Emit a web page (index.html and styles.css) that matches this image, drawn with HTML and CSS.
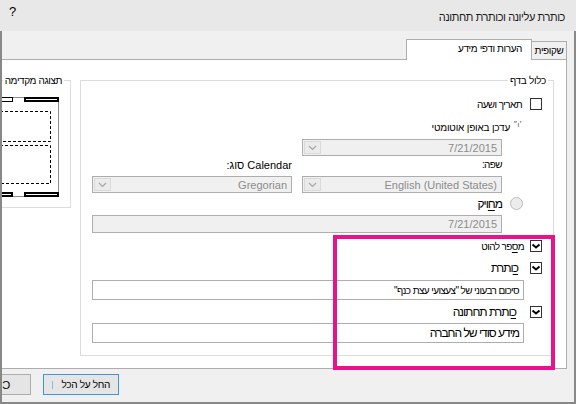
FILE: index.html
```html
<!DOCTYPE html>
<html lang="he" dir="rtl">
<head>
  <meta charset="UTF-8" />
  <title>כותרת עליונה וכותרת תחתונה</title>
  <link rel="stylesheet" href="styles.css">
</head>
<body>
  <div class="window">
    <div class="titlebar">
      <span class="title">כותרת עליונה וכותרת תחתונה</span>
      <span class="help">?</span>
    </div>

    <div class="frame">
      <div class="tabs">
        <div class="tab">שקופית</div>
        <div class="tab active">הערות ודפי מידע</div>
      </div>

      <div class="panel">
        <fieldset class="group include">
          <legend>כלול בדף</legend>

          <div class="opt-row date-row">
            <span class="check"></span>
            <span>תאריך ושעה</span>
          </div>

          <div class="auto-row">
            <span class="radio-mark">׳ו״</span>
            <span>עדכן באופן אוטומטי</span>
          </div>

          <div class="field-row first-select">
            <div class="select">
              <span class="value"><bdi>7/21/2015</bdi></span>
              <span class="drop"><svg width="9" height="6" viewBox="0 0 9 6"><path d="M1 1L4.5 4.5L8 1" fill="none" stroke="#a6a6a6" stroke-width="1.2"/></svg></span>
            </div>
          </div>

          <div class="field-row label-row">
            <span>שפה:</span>
            <span class="mixed">Calendar סוג:</span>
          </div>

          <div class="field-row select-row">
            <div class="select">
              <span class="value"><bdi>English (United States)</bdi></span>
              <span class="drop"><svg width="9" height="6" viewBox="0 0 9 6"><path d="M1 1L4.5 4.5L8 1" fill="none" stroke="#a6a6a6" stroke-width="1.2"/></svg></span>
            </div>
            <div class="select">
              <span class="value"><bdi>Gregorian</bdi></span>
              <span class="drop"><svg width="9" height="6" viewBox="0 0 9 6"><path d="M1 1L4.5 4.5L8 1" fill="none" stroke="#a6a6a6" stroke-width="1.2"/></svg></span>
            </div>
          </div>

          <div class="radio-row">
            <span class="radio"></span>
            <span class="big">מ<u>ח</u>ויק</span>
          </div>

          <div class="field-row fixed-row">
            <div class="box off"><bdi>7/21/2015</bdi></div>
          </div>

          <div class="opt-row slide-row">
            <span class="check"><svg width="10" height="10" viewBox="0 0 10 10"><path d="M1.5 3.5L5 6.5L8.5 3.5" fill="none" stroke="#000" stroke-width="2"/></svg></span>
            <span>מ<u>ס</u>פר להוט</span>
          </div>

          <div class="opt-row header-row">
            <span class="check"><svg width="10" height="10" viewBox="0 0 10 10"><path d="M1.5 3.5L5 6.5L8.5 3.5" fill="none" stroke="#000" stroke-width="2"/></svg></span>
            <span class="big"><u>כ</u>ותרת</span>
          </div>

          <div class="text-row header-text">
            <div class="box">סיכום רבעוני של "צעצועי עצת כנף"</div>
          </div>

          <div class="opt-row footer-row">
            <span class="check"><svg width="10" height="10" viewBox="0 0 10 10"><path d="M1.5 3.5L5 6.5L8.5 3.5" fill="none" stroke="#000" stroke-width="2"/></svg></span>
            <span class="big"><u>כ</u>ותרת תחתונה</span>
          </div>

          <div class="text-row footer-text">
            <div class="box big">מידע סודי של החברה</div>
          </div>
        </fieldset>

        <fieldset class="group preview">
          <legend>תצוגה מקדימה</legend>
          <!-- page thumbnail: header/footer placeholders and the two dashed body areas -->
          <svg class="thumb" width="70" height="101" viewBox="-11 96 70 101">
            <rect x="-20.5" y="97.5" width="79" height="99" fill="#fff" stroke="#8c8c8c"/>
            <path d="M-20 111.5H50.5V141.5H-20" fill="none" stroke="#000" stroke-dasharray="3 2"/>
            <path d="M-20 145.5H50.5V183.5H-20" fill="none" stroke="#000" stroke-dasharray="3 2"/>
            <rect x="-20.5" y="97.5" width="33" height="4" fill="#fff" stroke="#000"/>
            <rect x="25" y="98" width="33" height="3" fill="#fff" stroke="#000" stroke-width="2"/>
            <rect x="-20" y="193" width="32" height="3" fill="#fff" stroke="#000" stroke-width="2"/>
            <rect x="25" y="193" width="33" height="3" fill="#fff" stroke="#000" stroke-width="2"/>
          </svg>
        </fieldset>
      </div>

      <div class="buttons">
        <div class="btn apply"><span>החל על הכל</span><span class="caret"></span></div>
        <div class="btn cancel"><span class="flip">Cancel</span></div>
      </div>
    </div>

    <div class="highlight"></div>
  </div>
</body>
</html>
```

FILE: styles.css
```css
* {
  box-sizing: border-box;
}
html, body {
  margin: 0;
}
body {
  width: 576px;
  height: 404px;
  overflow: hidden;
  background-color: #f0f0f0;
  font-family: "Liberation Sans", Arial, sans-serif;
  font-size: 10px;
  letter-spacing: -0.6px;
  color: #000;
}
bdi, .mixed {
  font-size: 11px;
  letter-spacing: 0;
}
u {
  text-decoration: underline;
  text-underline-offset: 2px;
}
.window {
  position: relative;
  width: 576px;
  height: 404px;
}

/* title bar */
.titlebar {
  display: flex;
  align-items: flex-start;
  height: 31px;
  padding: 0 11px 0 9px;
  background-color: #e8e8e8;
}
.title {
  margin-top: 10px;
  font-size: 11px;
  letter-spacing: -0.4px;
  line-height: 14px;
  color: #1a1a1a;
}
.help {
  margin-right: auto;
  margin-top: 5px;
  font-size: 13px;
  letter-spacing: 0;
  line-height: 14px;
}

/* dialog body */
.frame {
  height: 373px;
  padding-top: 8px;
  border: 2px solid #888;
  border-top: 0;
  background-color: #f0f0f0;
  overflow: hidden;
}
.tabs {
  display: flex;
  align-items: flex-start;
  height: 21px;
  margin: 0 7px -1px 0;
}
.tab {
  width: 36px;
  height: 18px;
  margin-top: 2px;
  border: 1px solid #adadad;
  border-bottom: 0;
  background-color: #f0f0f0;
  text-align: center;
  letter-spacing: -0.4px;
  line-height: 17px;
}
.tab.active {
  position: relative;
  z-index: 1;
  width: 126px;
  height: 21px;
  margin-top: 0;
  margin-right: -1px;
  padding-right: 9px;
  background-color: #fff;
  text-align: right;
  line-height: 18px;
}
.panel {
  display: flex;
  align-items: flex-start;
  gap: 9px;
  width: 607px;
  height: 310px;
  margin-right: 7px;
  padding: 14px 12px 0 10px;
  border: 1px solid #adadad;
  background-color: #fff;
}

/* group boxes */
.group {
  margin: 0;
  padding: 0;
  min-width: 0;
  border: 1px solid #dcdcdc;
}
.group legend {
  margin-right: 5px;
  padding: 0 2px;
  font-size: 10px;
  letter-spacing: -0.3px;
  line-height: 13px;
}
.include {
  flex: none;
  width: 474px;
  padding-bottom: 12px;
}
.preview {
  flex: none;
  width: 100px;
  padding-bottom: 10px;
}
.preview legend {
  margin-right: 6px;
  letter-spacing: -0.4px;
}
.thumb {
  display: block;
  margin: 9px 11px 0 0;
}

/* rows inside the include box */
.opt-row {
  display: flex;
  align-items: center;
  gap: 8px;
  height: 12px;
  padding-right: 11px;
}
.check {
  flex: none;
  display: flex;
  align-items: center;
  justify-content: center;
  width: 12px;
  height: 12px;
  border: 1px solid #333;
  background-color: #fff;
}
.date-row {
  margin-top: 11px;
}
.auto-row {
  display: flex;
  align-items: center;
  gap: 2px;
  height: 14px;
  margin-top: 10px;
  padding-right: 31px;
  letter-spacing: -0.2px;
}
.radio-mark {
  display: inline-block;
  width: 10px;
  margin-top: -6px;
  font-size: 7px;
  letter-spacing: 0;
  line-height: 7px;
  color: #444;
}
.field-row {
  display: flex;
  gap: 10px;
  padding-right: 51px;
}
.first-select {
  margin-top: 5px;
}
.label-row {
  height: 14px;
  margin-top: 2px;
  line-height: 14px;
}
.label-row span {
  width: 200px;
}
.select-row {
  margin-top: 4px;
}
.select {
  display: flex;
  align-items: center;
  width: 200px;
  height: 17px;
  border: 1px solid #adadad;
  background-color: #f0f0f0;
  color: #8c8c8c;
}
.select .value {
  flex: 1;
  padding-right: 4px;
}
.select .drop {
  display: flex;
  align-items: center;
  justify-content: center;
  width: 17px;
  height: 13px;
  margin-left: 1px;
  border: 1px solid #dadada;
  background-color: #ebebeb;
}
.radio-row {
  display: flex;
  align-items: center;
  gap: 8px;
  height: 13px;
  margin-top: 4px;
  padding-right: 30px;
}
.radio {
  flex: none;
  width: 13px;
  height: 13px;
  border: 1px solid #bcbcbc;
  border-radius: 50%;
  background-color: #ececec;
}
.big {
  font-size: 12px;
  letter-spacing: -1px;
}
.fixed-row {
  margin-top: 5px;
}
.box {
  display: flex;
  align-items: center;
  width: 410px;
  height: 18px;
  padding-right: 4px;
  border: 1px solid #adadad;
  background-color: #fff;
}
.box.off {
  background-color: #f0f0f0;
  color: #8c8c8c;
}
.slide-row {
  gap: 6px;
  margin-top: 7px;
}
.header-row {
  gap: 12px;
  margin-top: 10px;
}
.footer-row {
  gap: 14px;
  margin-top: 6px;
}
.text-row {
  padding-right: 29px;
}
.text-row .box {
  width: 432px;
  height: 20px;
}
.header-text {
  margin-top: 6px;
}
.footer-text {
  margin-top: 5px;
}

/* bottom buttons */
.buttons {
  display: flex;
  justify-content: flex-end;
  gap: 12px;
  margin: 5px 0 0 -46px;
  letter-spacing: -0.3px;
}
.btn {
  display: flex;
  align-items: center;
  height: 21px;
  border: 1px solid #adadad;
  background-color: #e5e5e5;
}
.btn.apply {
  justify-content: space-between;
  width: 76px;
  padding: 0 8px;
  border-color: #3c96e8;
}
.caret {
  width: 1px;
  height: 8px;
  background-color: #7dbdf0;
}
.btn.cancel {
  justify-content: center;
  width: 75px;
  font-size: 11px;
  letter-spacing: 0;
}
.flip {
  display: inline-block;
  transform: scaleX(-1);
}

/* magenta call-out frame around the header/footer options */
.highlight {
  position: absolute;
  left: 333px;
  top: 235px;
  width: 222px;
  height: 135px;
  border: 4px solid #e8138b;
}
```
